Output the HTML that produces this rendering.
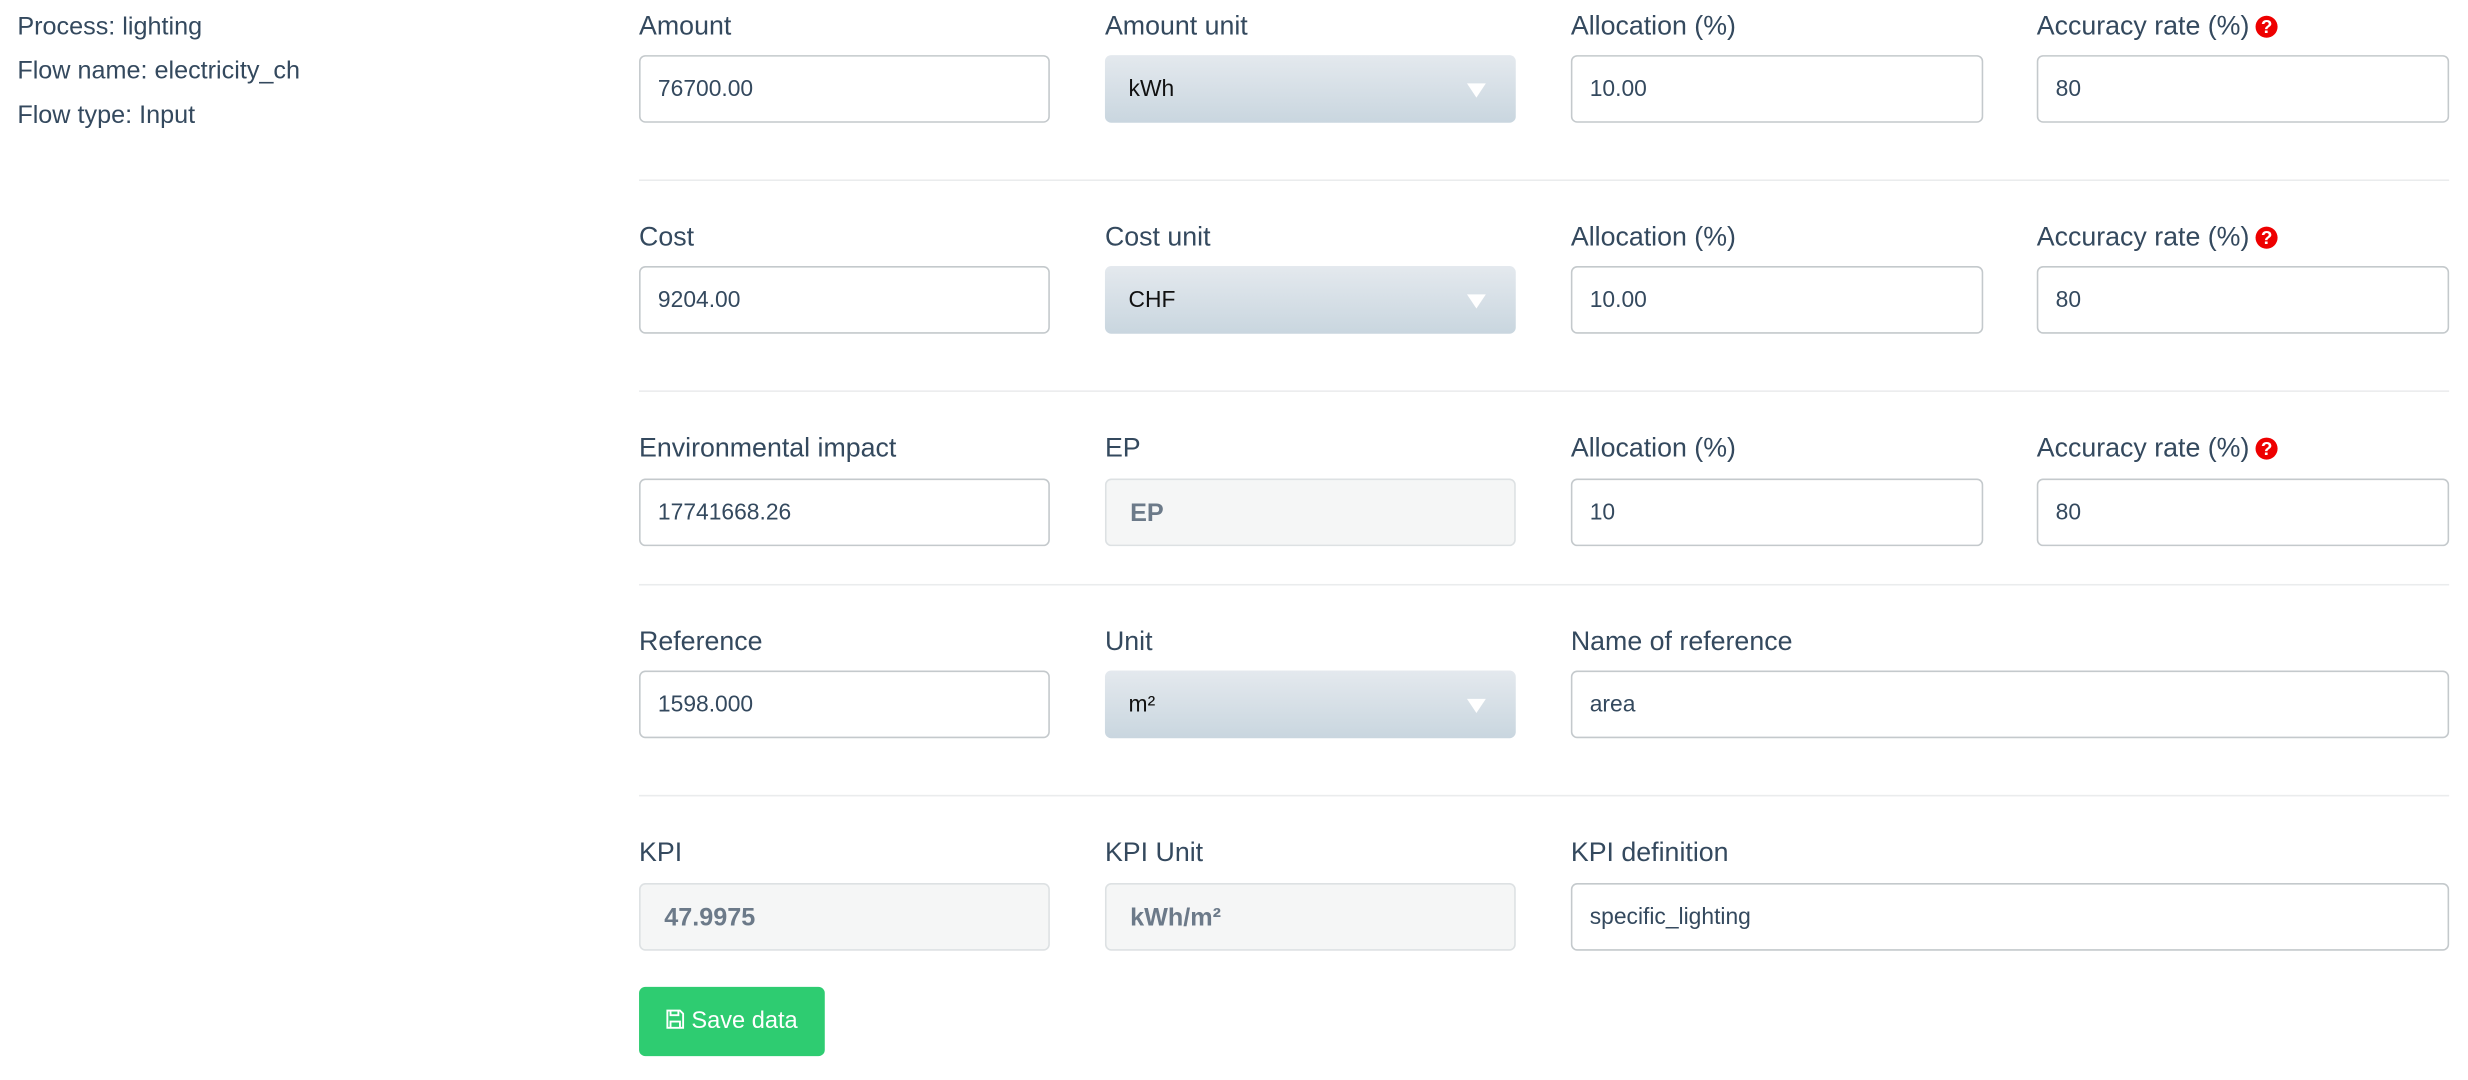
<!DOCTYPE html>
<html><head><meta charset="utf-8"><style>
html,body{margin:0;padding:0;background:#fff;width:2468px;height:1080px;overflow:hidden}
#c{position:absolute;left:0;top:0;width:1568px;height:686px;transform:scale(1.574);transform-origin:0 0;font-family:"Liberation Sans",sans-serif;color:#34495e}
.t{position:absolute;font-size:16px;line-height:18px}
.l{position:absolute;font-size:17px;line-height:18px}
.i{position:absolute;box-sizing:border-box;height:43px;border:1px solid #c4c9cc;border-radius:4px;background:#fff;font-size:14.5px;line-height:43px;padding-left:11px;color:#34495e}
.s{border:none;background:linear-gradient(#e4e9ee,#c9d6df);color:#111;line-height:45px;padding-left:15px}
.s:after{content:"";position:absolute;right:19px;top:18px;border-left:6px solid transparent;border-right:6px solid transparent;border-top:9px solid #fff}
.d{background:#f5f6f6;border-color:#dde1e3;font-weight:bold;color:#6c7a89;font-size:16px;padding-left:15px}
.hr{position:absolute;left:406px;width:1150px;height:1px;background:#eaeced}
.q{display:inline-block;width:14px;height:14px;border-radius:50%;background:#e00;color:#fff;font-size:12px;font-weight:bold;line-height:14px;text-align:center;vertical-align:1px;margin-left:4px}
.b{position:absolute;left:406px;top:627px;width:118px;height:44px;background:#2ecc71;border-radius:4px;color:#fff;font-size:15px;line-height:44px;text-align:center}
</style></head><body><div id="c">
<div class="t" style="left:11px;top:9px">Process: lighting</div>
<div class="t" style="left:11px;top:37px">Flow name: electricity_ch</div>
<div class="t" style="left:11px;top:65px">Flow type: Input</div>

<div class="l" style="left:406px;top:8px">Amount</div>
<div class="l" style="left:702px;top:8px">Amount unit</div>
<div class="l" style="left:998px;top:8px">Allocation (%)</div>
<div class="l" style="left:1294px;top:8px">Accuracy rate (%)<span class="q">?</span></div>
<div class="i" style="left:406px;top:35px;width:261px">76700.00</div>
<div class="i s" style="left:702px;top:35px;width:261px">kWh</div>
<div class="i" style="left:998px;top:35px;width:262px">10.00</div>
<div class="i" style="left:1294px;top:35px;width:262px">80</div>
<div class="hr" style="top:114px"></div>

<div class="l" style="left:406px;top:142px">Cost</div>
<div class="l" style="left:702px;top:142px">Cost unit</div>
<div class="l" style="left:998px;top:142px">Allocation (%)</div>
<div class="l" style="left:1294px;top:142px">Accuracy rate (%)<span class="q">?</span></div>
<div class="i" style="left:406px;top:169px;width:261px">9204.00</div>
<div class="i s" style="left:702px;top:169px;width:261px">CHF</div>
<div class="i" style="left:998px;top:169px;width:262px">10.00</div>
<div class="i" style="left:1294px;top:169px;width:262px">80</div>
<div class="hr" style="top:248px"></div>

<div class="l" style="left:406px;top:276px">Environmental impact</div>
<div class="l" style="left:702px;top:276px">EP</div>
<div class="l" style="left:998px;top:276px">Allocation (%)</div>
<div class="l" style="left:1294px;top:276px">Accuracy rate (%)<span class="q">?</span></div>
<div class="i" style="left:406px;top:304px;width:261px">17741668.26</div>
<div class="i d" style="left:702px;top:304px;width:261px">EP</div>
<div class="i" style="left:998px;top:304px;width:262px">10</div>
<div class="i" style="left:1294px;top:304px;width:262px">80</div>
<div class="hr" style="top:371px"></div>

<div class="l" style="left:406px;top:399px">Reference</div>
<div class="l" style="left:702px;top:399px">Unit</div>
<div class="l" style="left:998px;top:399px">Name of reference</div>
<div class="i" style="left:406px;top:426px;width:261px">1598.000</div>
<div class="i s" style="left:702px;top:426px;width:261px">m²</div>
<div class="i" style="left:998px;top:426px;width:558px">area</div>
<div class="hr" style="top:505px"></div>

<div class="l" style="left:406px;top:533px">KPI</div>
<div class="l" style="left:702px;top:533px">KPI Unit</div>
<div class="l" style="left:998px;top:533px">KPI definition</div>
<div class="i d" style="left:406px;top:561px;width:261px">47.9975</div>
<div class="i d" style="left:702px;top:561px;width:261px">kWh/m²</div>
<div class="i" style="left:998px;top:561px;width:558px">specific_lighting</div>

<div class="b"><svg width="12" height="13" viewBox="0 0 12 13" style="vertical-align:-1px;margin-right:4px"><path d="M1 1h8l2 2v9H1z M3 1v3h5V1 M3 12V8h6v4" fill="none" stroke="#fff" stroke-width="1.2"/></svg>Save data</div>
</div></body></html>
